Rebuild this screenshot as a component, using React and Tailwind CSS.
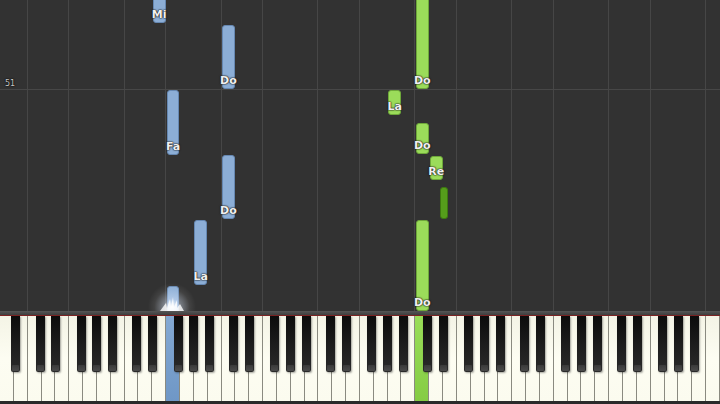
import React from 'react';

const W = 720 / 52;
const LETTERS = ['A', 'B', 'C', 'D', 'E', 'F', 'G'];
const BLACK_OFFSET = { A: 2, C: -1.5, D: 0.5, F: -2, G: 0 };

// notes: white key index, or black key after white index
const notes = [
  { key: 11, top: -10, bottom: 23, label: 'Mi', hand: 'left' },
  { key: 16, top: 25, bottom: 89, label: 'Do', hand: 'left' },
  { key: 12, top: 90, bottom: 155, label: 'Fa', hand: 'left' },
  { key: 16, top: 155, bottom: 219, label: 'Do', hand: 'left' },
  { key: 14, top: 220, bottom: 285, label: 'La', hand: 'left' },
  { key: 12, top: 286, bottom: 320, label: '', hand: 'left' },
  { key: 30, top: -10, bottom: 89, label: 'Do', hand: 'right' },
  { key: 28, top: 90, bottom: 115, label: 'La', hand: 'right' },
  { key: 30, top: 123, bottom: 154, label: 'Do', hand: 'right' },
  { key: 31, top: 156, bottom: 180, label: 'Re', hand: 'right' },
  { black: 31, top: 187, bottom: 219, label: '', hand: 'right' },
  { key: 30, top: 220, bottom: 311, label: 'Do', hand: 'right' },
];

const pressed = { 12: 'left', 30: 'right' };

function blackLeft(i) {
  return (i + 1) * W + BLACK_OFFSET[LETTERS[i % 7]] - 4.5;
}

function Note({ n }) {
  const isBlack = n.black !== undefined;
  const left = isBlack ? blackLeft(n.black) + 0.5 : n.key * W + 0.5;
  const width = isBlack ? 8 : W - 1;
  const color = isBlack
    ? 'bg-[#559d1b] border-[#3d7810]'
    : n.hand === 'left'
    ? 'bg-[#8caed6] border-[#6688b2]'
    : 'bg-[#9bdc5a] border-[#6ea83a]';
  return (
    <div
      className={`absolute rounded-[3px] border flex items-end justify-center ${color}`}
      style={{ left, width, top: n.top, height: n.bottom - n.top }}
    >
      {n.label && (
        <span className="mb-[2px] whitespace-nowrap text-[11px] leading-none font-semibold text-[#f0f0f0] font-['DejaVu_Sans',sans-serif] [text-shadow:0_0_2px_#1a1a1a,0_0_1px_#1a1a1a,0_0_1px_#1a1a1a]">
          {n.label}
        </span>
      )}
    </div>
  );
}

function Roll() {
  const lines = [];
  for (let i = 0; i < 52; i++) {
    const l = LETTERS[i % 7];
    if (l === 'C' || l === 'F') lines.push(i);
  }
  return (
    <div className="relative h-[311px] bg-[#323232] overflow-hidden">
      {lines.map((i) => (
        <div key={i} className="absolute top-0 bottom-0 w-px bg-[#464646]" style={{ left: Math.round(i * W) - 1 }} />
      ))}
      <div className="absolute left-0 right-0 top-[89px] h-px bg-[#474747]" />
      <span className="absolute left-[5px] top-[80px] text-[8px] leading-none text-[#c8c8c8] font-['DejaVu_Sans',sans-serif] [text-shadow:0_0_2px_#000,0_0_1px_#000]">
        51
      </span>
      {notes.map((n, i) => (
        <Note key={i} n={n} />
      ))}
      {/* glow at the hit line */}
      <div className="absolute left-[147px] top-[282px] w-[50px] h-[50px] rounded-full bg-[radial-gradient(circle,rgba(255,255,255,0.95)_0%,rgba(220,232,250,0.45)_22%,rgba(255,255,255,0.08)_50%,rgba(255,255,255,0)_68%)]" />
      <svg className="absolute left-[158px] top-[296px]" width="28" height="15" viewBox="0 0 28 15">
        <path d="M2 15 L8 7 L9 12 L12 3 L13 11 L15 1 L16 11 L19 4 L19 12 L22 8 L26 15 Z" fill="rgba(255,255,255,0.8)" />
      </svg>
    </div>
  );
}

function Keyboard() {
  const whites = Array.from({ length: 52 }, (_, i) => i);
  const blacks = whites.filter((i) => i < 51 && BLACK_OFFSET[LETTERS[i % 7]] !== undefined);
  return (
    <div className="relative h-[85px] flex">
      {whites.map((i) => (
        <div
          key={i}
          className={`flex-1 border-r border-[#8a8a80] ${
            pressed[i] === 'left'
              ? 'bg-gradient-to-b from-[#84a9d3] to-[#6f97c6]'
              : pressed[i] === 'right'
              ? 'bg-gradient-to-b from-[#9ade58] to-[#85cc44]'
              : 'bg-gradient-to-b from-[#f4f4e6] via-[#fdfdf2] to-[#fbfbef]'
          }`}
        />
      ))}
      {blacks.map((i) => (
        <div
          key={i}
          className="absolute top-0 h-[56px] w-[9px] rounded-b-[2px] bg-gradient-to-b from-[#0c0c0c] via-[#1c1c1c] to-[#2a2a2a] flex flex-col justify-end shadow-[1px_1px_2px_rgba(0,0,0,0.35)]"
          style={{ left: blackLeft(i) }}
        >
          <div className="h-[6px] mx-[1px] mb-[1px] rounded-[1px] bg-gradient-to-b from-[#3a3a3a] to-[#4a4a4a]" />
        </div>
      ))}
    </div>
  );
}

export default function App() {
  return (
    <div className="w-[720px] h-[404px] bg-[#2c2c2c] flex flex-col overflow-hidden">
      <Roll />
      <div className="h-[4px] bg-gradient-to-b from-[#565656] to-[#3e3e3e]" />
      <div className="h-px bg-[#7c2323]" />
      <Keyboard />
      <div className="flex-1 bg-[#2a2a2a]" />
    </div>
  );
}
